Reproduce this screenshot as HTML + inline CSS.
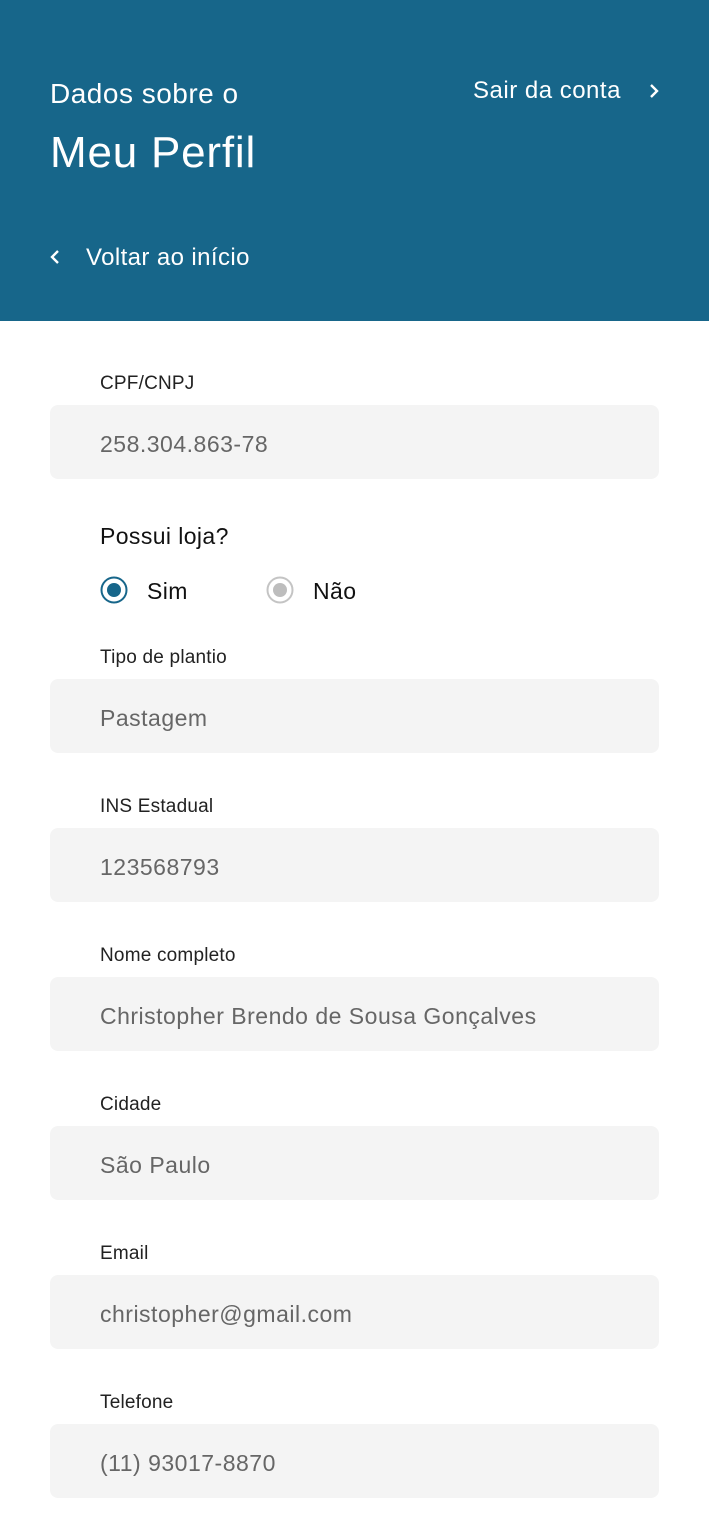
<!DOCTYPE html>
<html><head><meta charset="utf-8"><style>
*{margin:0;padding:0;box-sizing:border-box}
body{width:709px;height:1513px;background:#fff;font-family:"Liberation Sans",sans-serif;position:relative;overflow:hidden}
.hd{position:absolute;left:0;top:0;width:709px;height:321px;background:#17668a;color:#fff}
.t{position:absolute;white-space:nowrap;line-height:1}
.lbl{position:absolute;left:100px;font-size:19px;color:#222;line-height:1;letter-spacing:0.2px}
.box{position:absolute;left:50px;width:609px;height:74px;background:#f4f4f4;border-radius:8px;padding-left:50px;padding-top:2px;line-height:74px;font-size:23px;color:#666;letter-spacing:0.5px}
</style></head><body>
<div class="hd">
<div class="t" style="left:50px;top:80px;font-size:28px;letter-spacing:0.5px">Dados sobre o</div>
<div class="t" style="left:50px;top:131px;font-size:44px;letter-spacing:0.8px">Meu Perfil</div>
<div class="t" style="left:473px;top:79px;font-size:24px;letter-spacing:0.5px">Sair da conta</div>
<svg style="position:absolute;left:646px;top:81px" width="16" height="20" viewBox="0 0 16 20"><path d="M5 4l6 6-6 6" stroke="#fff" stroke-width="2.4" fill="none"/></svg>
<div class="t" style="left:86px;top:246px;font-size:24px;letter-spacing:0.4px">Voltar ao início</div>
<svg style="position:absolute;left:47px;top:247px" width="16" height="20" viewBox="0 0 16 20"><path d="M11 4l-6 6 6 6" stroke="#fff" stroke-width="2.4" fill="none"/></svg>
</div>
<div class="lbl" style="top:374px">CPF/CNPJ</div>
<div class="box" style="top:405px">258.304.863-78</div>
<div class="t" style="left:100px;top:525px;font-size:23px;color:#111;letter-spacing:0.4px">Possui loja?</div>
<svg style="position:absolute;left:100px;top:576px" width="28" height="28"><circle cx="14" cy="14" r="12.5" fill="none" stroke="#17668a" stroke-width="2"/><circle cx="14" cy="14" r="7" fill="#17668a"/></svg>
<div class="t" style="left:147px;top:580px;font-size:23px;color:#111;letter-spacing:0.4px">Sim</div>
<svg style="position:absolute;left:266px;top:576px" width="28" height="28"><circle cx="14" cy="14" r="12.5" fill="none" stroke="#c4c4c4" stroke-width="2"/><circle cx="14" cy="14" r="7" fill="#bdbdbd"/></svg>
<div class="t" style="left:313px;top:580px;font-size:23px;color:#111;letter-spacing:0.4px">Não</div>
<div class="lbl" style="top:648px">Tipo de plantio</div>
<div class="box" style="top:679px">Pastagem</div>
<div class="lbl" style="top:797px">INS Estadual</div>
<div class="box" style="top:828px">123568793</div>
<div class="lbl" style="top:946px">Nome completo</div>
<div class="box" style="top:977px">Christopher Brendo de Sousa Gonçalves</div>
<div class="lbl" style="top:1095px">Cidade</div>
<div class="box" style="top:1126px">São Paulo</div>
<div class="lbl" style="top:1244px">Email</div>
<div class="box" style="top:1275px">christopher@gmail.com</div>
<div class="lbl" style="top:1393px">Telefone</div>
<div class="box" style="top:1424px">(11) 93017-8870</div>
</body></html>
